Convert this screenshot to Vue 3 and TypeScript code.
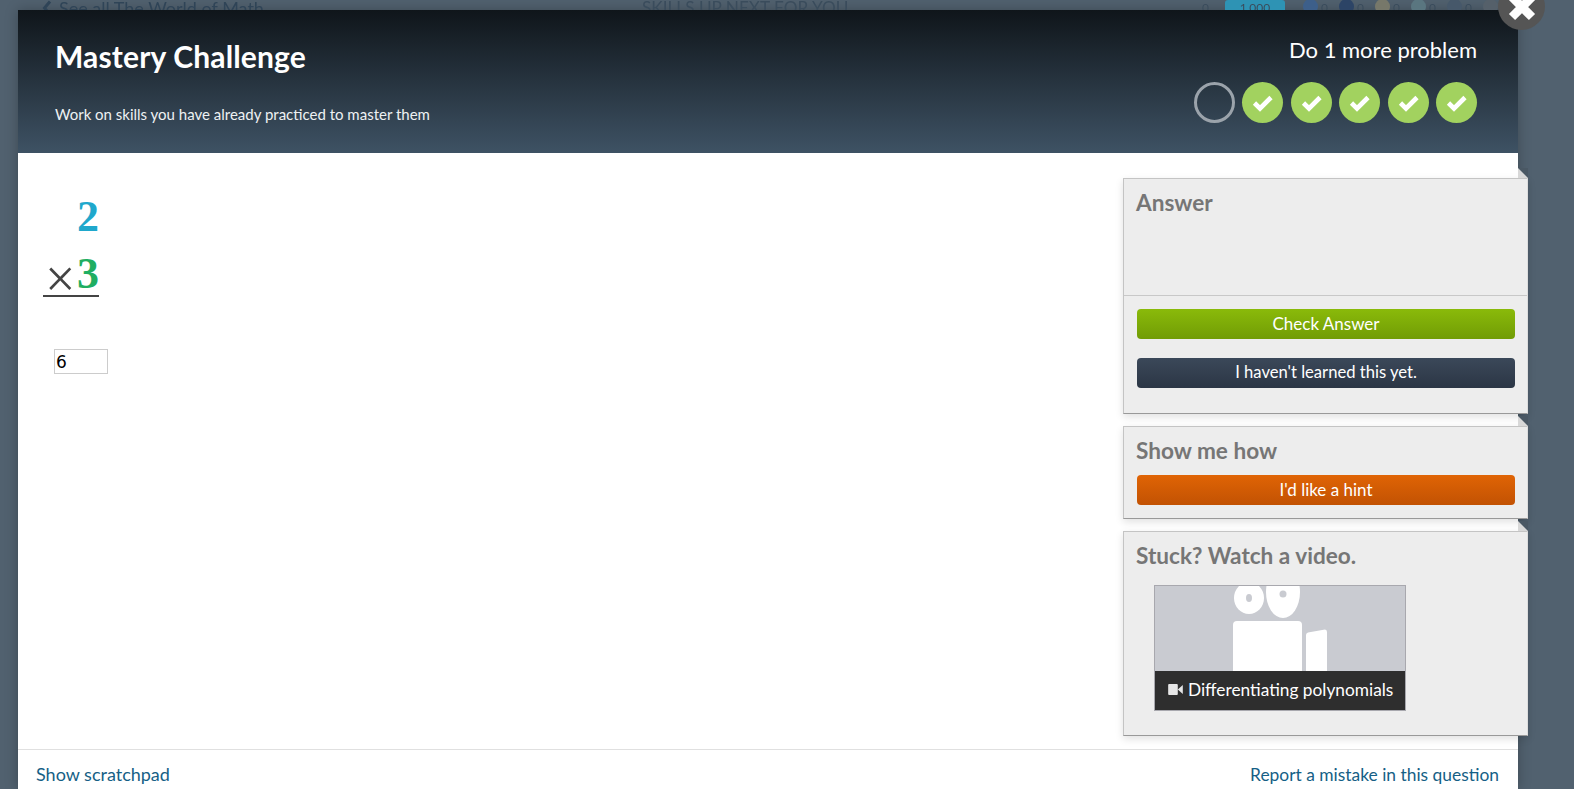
<script setup lang="ts">
const steps = [false, true, true, true, true, true]
const statIcons = ['#3d5f8a', '#2c4466', '#77786a', '#5a7680', '#46586a', '#55606a']
</script>

<template>
  <div class="page">
    <div class="behind">
      <div class="back">
        <svg viewBox="0 0 10 16" width="10" height="16">
          <path d="M8 1.500L2.500 8 8 14.500" fill="none" stroke="#2f4457" stroke-width="3" />
        </svg>
        <span>See all The World of Math</span>
      </div>
      <div class="next">SKILLS UP NEXT FOR YOU</div>
      <div class="stats">
        <span class="zero">0</span>
        <span class="points">1,000</span>
        <span v-for="c in statIcons" :key="c" class="stat">
          <i :style="{ background: c }"></i>0
        </span>
      </div>
    </div>

    <div class="modal">
      <header class="head">
        <div class="head-left">
          <h1>Mastery Challenge</h1>
          <p>Work on skills you have already practiced to master them</p>
        </div>
        <div class="head-right">
          <div class="remain">Do 1 more problem</div>
          <div class="steps">
            <span v-for="(done, i) in steps" :key="i" class="step" :class="{ done }">
              <svg v-if="done" viewBox="0 0 41 41" width="41" height="41">
                <path d="M12.500 21l5.500 5.500L29 15.500" fill="none" stroke="#fff" stroke-width="4.600" />
              </svg>
            </span>
          </div>
        </div>
      </header>

      <div class="body">
        <main class="problem">
          <div class="sum">
            <div class="line"><span class="num blue">2</span></div>
            <div class="line rule"><span class="times">×</span><span class="num green">3</span></div>
          </div>
          <input class="answer" value="6" />
        </main>

        <aside class="side">
          <section class="card">
            <div class="answer-top"><h2>Answer</h2></div>
            <div class="answer-btns">
              <button class="btn green-btn">Check Answer</button>
              <button class="btn dark-btn">I haven't learned this yet.</button>
            </div>
          </section>
          <section class="card hint-card">
            <h2>Show me how</h2>
            <button class="btn orange-btn">I'd like a hint</button>
          </section>
          <section class="card video-card">
            <h2>Stuck? Watch a video.</h2>
            <div class="thumb">
              <svg class="robot" viewBox="0 0 250 124" width="250" height="124">
                <ellipse cx="94" cy="12" rx="15" ry="16" fill="#fff" />
                <ellipse cx="128" cy="6" rx="17" ry="26" fill="#fff" />
                <ellipse cx="94" cy="12" rx="3" ry="4" fill="#c9cbd1" />
                <circle cx="128" cy="8" r="3.500" fill="#c9cbd1" />
                <rect x="78" y="35" width="69" height="60" rx="4" fill="#fff" />
                <path d="M151 49q0-2 2-2.500l17-3q2 0 2 2.500V95h-21z" fill="#fff" />
              </svg>
              <div class="caption">
                <svg viewBox="0 0 16 12" width="15" height="11">
                  <rect x="0" y="0" width="10.500" height="12" rx="1" fill="#e6e6e6" />
                  <path d="M10.500 6L16 1v10z" fill="#e6e6e6" />
                </svg>
                <span>Differentiating polynomials</span>
              </div>
            </div>
          </section>
        </aside>
      </div>

      <footer class="foot">
        <a>Show scratchpad</a>
        <a class="report">Report a mistake in this question</a>
      </footer>
    </div>

    <div class="close">
      <svg viewBox="0 0 24 24" width="30" height="30">
        <path d="M4 4l16 16M20 4L4 20" stroke="#fff" stroke-width="7" />
      </svg>
    </div>
  </div>
</template>

<style>
html,
body {
  margin: 0;
  height: 100%;
  overflow: hidden;
  background: #51616f;
}
</style>

<style scoped>
.page {
  position: relative;
  width: 1574px;
  height: 789px;
  overflow: hidden;
  background: #51616f;
  font-family: Lato, "Liberation Sans", sans-serif;
}
.behind {
  height: 10px;
  overflow: hidden;
  display: flex;
  align-items: flex-start;
  padding-left: 42px;
  color: #2f4457;
  font-size: 18px;
  line-height: 16px;
  filter: blur(0.6px);
}
.back {
  width: 600px;
  display: flex;
  gap: 7px;
}
.next {
  width: 560px;
  color: #3a4c5c;
  font-size: 17.200px;
}
.stats {
  display: flex;
  align-items: flex-start;
  font-size: 12px;
  color: #3a4c5c;
}
.zero {
  margin-right: 16px;
}
.points {
  width: 60px;
  height: 16px;
  margin-right: 18px;
  border-radius: 3px;
  background: #2e93b4;
  text-align: center;
}
.stat {
  display: flex;
  width: 36px;
}
.stat i {
  display: block;
  width: 15px;
  height: 15px;
  margin: -1px 3px 0 0;
  border-radius: 50%;
}
.modal {
  width: 1500px;
  margin-left: 18px;
  height: 779px;
  display: flex;
  flex-direction: column;
  background: #fff;
  box-shadow: 0 0 12px rgba(0, 0, 0, 0.25);
}
.head {
  height: 143px;
  flex: none;
  box-sizing: border-box;
  padding: 30px 41px 0 37px;
  display: flex;
  justify-content: space-between;
  color: #fff;
  background: linear-gradient(#0f151a, #3e5264);
}
h1 {
  margin: 0;
  font-size: 30px;
  letter-spacing: 0.15px;
  line-height: 32px;
  font-weight: 700;
}
.head-left p {
  margin: 32px 0 0;
  font-size: 15px;
  line-height: 20px;
  color: #eef1f3;
}
.head-right {
  display: flex;
  flex-direction: column;
  align-items: flex-end;
}
.remain {
  font-size: 22px;
  line-height: 20px;
}
.steps {
  display: flex;
  gap: 7.500px;
  margin-top: 22px;
}
.step {
  width: 41px;
  height: 41px;
  box-sizing: border-box;
  border: 3px solid #9ba3ab;
  border-radius: 50%;
}
.step.done {
  border: 0;
  background: #a2d25f;
}
.step svg {
  display: block;
}
.body {
  flex: 1;
  min-height: 0;
  display: flex;
  justify-content: space-between;
}
.problem {
  padding: 26px 0 0 25px;
}
.sum {
  width: 56px;
}
.line {
  height: 58px;
  display: flex;
  justify-content: flex-end;
  align-items: flex-end;
  font-family: "Liberation Serif", serif;
}
.rule {
  height: 57px;
  padding-bottom: 1px;
  border-bottom: 2px solid #444;
  justify-content: space-between;
}
.num {
  width: 22px;
  font-size: 44px;
  line-height: 40px;
  font-weight: 700;
}
.blue {
  color: #1fa8cc;
}
.green {
  color: #1fae62;
}
.times {
  margin-left: 2px;
  font-size: 54px;
  line-height: 29px;
  color: #444;
}
.answer {
  display: block;
  box-sizing: border-box;
  width: 54px;
  height: 25px;
  margin: 52px 0 0 11px;
  padding: 0 1px;
  border: 1px solid #ccc;
  outline: 0;
  color: #000;
  font-family: "DejaVu Sans", sans-serif;
  font-size: 17px;
}
.side {
  width: 405px;
  margin: 25px -10px 0 0;
  display: flex;
  flex-direction: column;
  gap: 12px;
}
.card {
  position: relative;
  box-sizing: border-box;
  background: #ededed;
  border: 1px solid #c4c4c4;
  border-bottom-color: #999;
  border-right-color: #ddd;
  box-shadow: 0 3px 8px rgba(0, 0, 0, 0.12);
}
.card::before {
  content: "";
  position: absolute;
  right: -1px;
  top: -11px;
  border-style: solid;
  border-width: 10px 0 0 10px;
  border-color: #4a5864 transparent transparent #d8d8d8;
}
h2 {
  margin: 0 0 0 -1px;
  font-size: 22.600px;
  line-height: 28px;
  font-weight: 700;
  color: #767676;
}
.answer-top {
  height: 117px;
  box-sizing: border-box;
  padding: 10px 13px;
  border-bottom: 1px solid #c8c8c8;
}
.answer-btns {
  height: 117px;
  box-sizing: border-box;
  padding: 13px 13px 0;
  display: flex;
  flex-direction: column;
  gap: 19px;
}
.btn {
  display: block;
  width: 378px;
  height: 30px;
  padding: 0 0 2px;
  border: 0;
  border-radius: 4px;
  color: #fff;
  font-family: inherit;
  font-size: 17px;
}
.green-btn {
  background: linear-gradient(#8aba0a, #719c05);
}
.dark-btn {
  background: linear-gradient(#3b4859, #2b3645);
  font-size: 16.600px;
}
.orange-btn {
  background: linear-gradient(#e06405, #c25203);
}
.hint-card {
  height: 93px;
  padding: 10px 13px;
}
.hint-card h2 {
  margin-bottom: 10px;
}
.video-card {
  height: 205px;
  padding: 10px 13px;
}
.thumb {
  position: relative;
  width: 250px;
  height: 124px;
  margin: 15px 0 0 17px;
  border: 1px solid #a8a8ae;
  background: #c9cbd1;
  overflow: hidden;
}
.robot {
  display: block;
}
.caption {
  position: absolute;
  left: 0;
  right: 0;
  bottom: 0;
  height: 39px;
  box-sizing: border-box;
  padding: 0 0 2px 13px;
  display: flex;
  align-items: center;
  gap: 5px;
  background: #2e2e2e;
  color: #fff;
  font-size: 17.300px;
}
.foot {
  flex: none;
  height: 40px;
  box-sizing: border-box;
  border-top: 1px solid #e0e0e0;
  padding: 12px 19px 0 18px;
  display: flex;
  justify-content: space-between;
  align-items: baseline;
  color: #165f86;
  font-size: 18px;
  line-height: 24px;
}
.report {
  font-size: 17.400px;
}
.close {
  position: absolute;
  left: 1498px;
  top: -17px;
  width: 47px;
  height: 47px;
  border-radius: 50%;
  background: #555;
  display: flex;
  align-items: center;
  justify-content: center;
}
</style>
